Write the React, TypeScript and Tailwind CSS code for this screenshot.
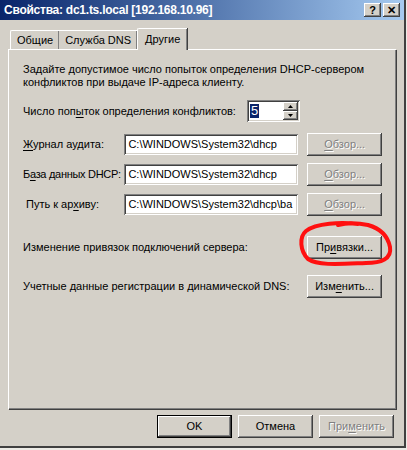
import { FC, ReactNode } from "react";

// classic win2k 3d borders
const raised = "shadow-[inset_-1px_-1px_0_#404040,inset_1px_1px_0_#ffffff,inset_-2px_-2px_0_#808080,inset_2px_2px_0_#d4d0c8]";
const sunken = "shadow-[inset_1px_1px_0_#808080,inset_-1px_-1px_0_#ffffff,inset_2px_2px_0_#404040,inset_-2px_-2px_0_#d4d0c8]";

const U: FC<{ children: ReactNode }> = ({ children }) => <span className="underline underline-offset-2">{children}</span>;

const Btn: FC<{ children: ReactNode; disabled?: boolean; isDefault?: boolean; className?: string }> = ({ children, disabled, isDefault, className }) => (
    <div className={`w-[75px] h-[23px] flex items-center justify-center bg-[#d4d0c8] ${isDefault ? "border border-black" : ""} ${className || ""}`}>
        <div className={`w-full h-full flex items-center justify-center ${raised} ${disabled ? "text-[#808080] [text-shadow:1px_1px_0_#ffffff]" : "text-black"}`}>
            {children}
        </div>
    </div>
);

const PathInput: FC<{ value: string }> = ({ value }) => (
    <div className={`w-[175px] h-[21px] bg-white ${sunken} px-[4px] flex items-center overflow-hidden whitespace-nowrap`}>
        {value}
    </div>
);

const App: FC = () => {
    return (
        <div className="w-[407px] h-[450px] bg-[#ecebe6] text-[11px] text-black font-['Liberation_Sans',Arial,sans-serif]">
            <div className="w-[406px] h-[448px] bg-[#d4d0c8] border-r-2 border-b-2 border-r-[#404040] border-b-[#404040] flex flex-col relative">
                {/* TITLE BAR */}
                <div className="h-[20px] bg-linear-to-r from-[#0a246a] to-[#a6caf0] flex items-center pl-[4px] pr-[4px]">
                    <span className="text-white font-bold text-[12px] tracking-[-0.25px]">Свойства: dc1.ts.local [192.168.10.96]</span>
                    <div className="ml-auto flex gap-[2px]">
                        <div className={`w-[17px] h-[14px] bg-[#d4d0c8] ${raised} flex items-center justify-center font-bold text-[11px] leading-none`}>?</div>
                        <div className={`w-[17px] h-[14px] bg-[#d4d0c8] ${raised} flex items-center justify-center font-bold text-[11px] leading-none`}>✕</div>
                    </div>
                </div>

                {/* TABS */}
                <div className="flex items-end h-[29px] pl-[10px]">
                    <div className="h-[19px] px-[6px] flex items-center border-l border-t border-white rounded-tl-[2px] shadow-[inset_-1px_0_0_#808080]">Общие</div>
                    <div className="h-[19px] px-[6px] flex items-center border-t border-white shadow-[inset_-1px_0_0_#808080,1px_0_0_#404040]">Служба DNS</div>
                    <div className="h-[22px] px-[7px] -mb-[1px] z-10 bg-[#d4d0c8] flex items-center border-l border-t border-white rounded-tl-[2px] shadow-[inset_-1px_0_0_#808080,1px_0_0_#404040]">Другие</div>
                </div>

                {/* PANEL */}
                <div className="ml-[8px] w-[388px] h-[360px] border-l border-t border-white shadow-[inset_-1px_-1px_0_#808080,1px_1px_0_#404040] pl-[14px] pr-[14px] pt-[13px] flex flex-col">
                    <p className="leading-[13px] w-[345px]">
                        Задайте допустимое число попыток определения DHCP-сервером конфликтов при выдаче IP-адреса клиенту.
                    </p>

                    <div className="flex items-center mt-[11px] h-[22px]">
                        <span className="w-[224px] whitespace-nowrap">Число поп<U>ы</U>ток определения конфликтов:</span>
                        <div className={`w-[53px] h-[22px] bg-white ${sunken} flex items-center pl-[3px] pr-[2px]`}>
                            <span className="bg-[#0a246a] text-white px-[1px] leading-[14px] text-[13px]">5</span>
                            <div className="ml-auto flex flex-col gap-0">
                                <div className={`w-[15px] h-[9px] bg-[#d4d0c8] ${raised} flex items-center justify-center`}>
                                    <svg width="5" height="3" viewBox="0 0 5 3"><path d="M2.5 0L5 3H0Z" fill="#000" /></svg>
                                </div>
                                <div className={`w-[15px] h-[9px] bg-[#d4d0c8] ${raised} flex items-center justify-center`}>
                                    <svg width="5" height="3" viewBox="0 0 5 3"><path d="M0 0H5L2.5 3Z" fill="#000" /></svg>
                                </div>
                            </div>
                        </div>
                    </div>

                    <div className="flex items-center mt-[11px]">
                        <span className="w-[102px] whitespace-nowrap"><U>Ж</U>урнал аудита:</span>
                        <PathInput value="C:\WINDOWS\System32\dhcp" />
                        <Btn disabled className="ml-[9px]"><U>О</U>бзор...</Btn>
                    </div>

                    <div className="flex items-center mt-[7px]">
                        <span className="w-[102px] whitespace-nowrap tracking-[-0.3px]">Б<U>а</U>за данных DHCP:</span>
                        <PathInput value="C:\WINDOWS\System32\dhcp" />
                        <Btn disabled className="ml-[9px]"><U>О</U>бзор...</Btn>
                    </div>

                    <div className="flex items-center mt-[7px]">
                        <span className="w-[102px] pl-[3px] whitespace-nowrap">Путь к ар<U>х</U>иву:</span>
                        <PathInput value="C:\WINDOWS\System32\dhcp\ba" />
                        <Btn disabled className="ml-[9px]"><U>О</U>бзор...</Btn>
                    </div>

                    <div className="flex items-center mt-[20px]">
                        <span className="w-[285px] whitespace-nowrap">Изменение привязок подключений сервера:</span>
                        <Btn>Пр<U>и</U>вязки...</Btn>
                    </div>

                    <div className="flex items-center mt-[16px]">
                        <span className="w-[285px] whitespace-nowrap">Учетные данные регистрации в динамической DNS:</span>
                        <Btn>Изм<U>е</U>нить...</Btn>
                    </div>
                </div>

                {/* BOTTOM BUTTONS */}
                <div className="flex justify-end gap-[6px] pr-[10px] mt-[6px]">
                    <Btn isDefault>OK</Btn>
                    <Btn>Отмена</Btn>
                    <Btn disabled>При<U>м</U>енить</Btn>
                </div>

                {/* red marker loop round the bindings button */}
                <svg className="absolute left-[296px] top-[219px] pointer-events-none" width="100" height="50" viewBox="0 0 100 50">
                    <path
                        d="M62 5 C45 3 20 4 10 12 C3 18 4 32 12 40 C22 47 45 45 70 44 C85 44 96 40 94 28 C92 18 86 10 72 6 C62 4 50 4 42 6"
                        fill="none" stroke="#ff1010" strokeWidth="4" strokeLinecap="round"
                    />
                </svg>
            </div>
        </div>
    );
}

export default App;
